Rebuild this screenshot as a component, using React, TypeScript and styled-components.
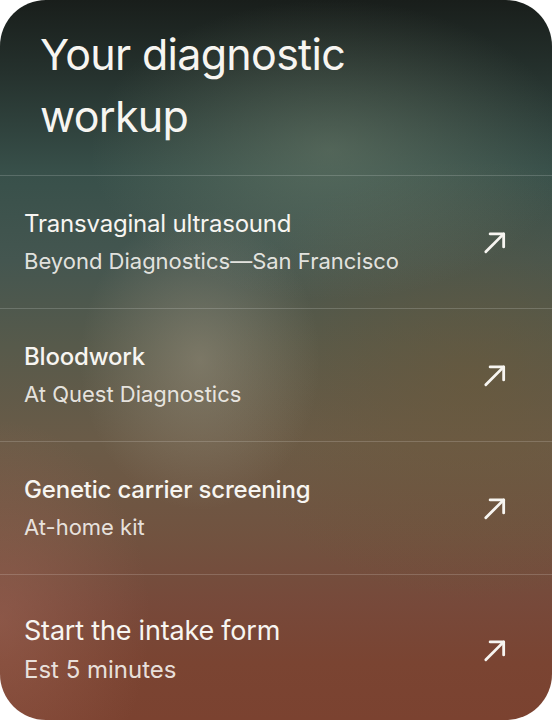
import styled, { createGlobalStyle } from 'styled-components'

const GlobalStyle = createGlobalStyle`
    html, body {
        margin: 0;
        padding: 0;
        background: #ffffff;
    }
    * {
        box-sizing: border-box;
    }
`

const items = [
    { title: 'Transvaginal ultrasound', sub: 'Beyond Diagnostics—San Francisco', strong: false },
    { title: 'Bloodwork', sub: 'At Quest Diagnostics', strong: true },
    { title: 'Genetic carrier screening', sub: 'At-home kit', strong: true },
    { title: 'Start the intake form', sub: 'Est 5 minutes', strong: false },
]

const Arrow = () => (
    <svg width="26" height="26" viewBox="0 0 24 24" fill="none" stroke="#f7f5f1" strokeWidth="2.6" strokeLinecap="round" strokeLinejoin="round">
        <path d="M3.5 21 L20 4.5" />
        <path d="M7.5 4.5 H20 V16.5" />
    </svg>
)

const App = () => {
    return (
        <>
            <GlobalStyle />
            <Card>
                <Header>
                    <Title>Your diagnostic workup</Title>
                </Header>
                {items.map((item, index) => {
                    const last = index === items.length - 1
                    return (
                        <Row key={index} $last={last}>
                            <TextBlock $last={last}>
                                <ItemTitle $strong={item.strong} $last={last}>{item.title}</ItemTitle>
                                <ItemSub $last={last}>{item.sub}</ItemSub>
                            </TextBlock>
                            <Arrow />
                        </Row>
                    )
                })}
            </Card>
        </>
    )
}

const Card = styled.div`
    width: 552px;
    height: 720px;
    border-radius: 46px;
    overflow: hidden;
    display: flex;
    flex-direction: column;
    font-family: Inter, 'Noto Sans', sans-serif;
    color: #f7f5f1;
    background:
        radial-gradient(ellipse 120px 150px at 200px 360px, rgba(165, 155, 135, 0.45), rgba(165, 155, 135, 0) 100%),
        radial-gradient(ellipse 240px 150px at 330px 150px, rgba(125, 140, 118, 0.42), rgba(125, 140, 118, 0) 100%),
        radial-gradient(ellipse 150px 200px at 0px 620px, rgba(170, 110, 95, 0.4), rgba(170, 110, 95, 0) 100%),
        radial-gradient(ellipse 260px 220px at 470px 380px, rgba(110, 88, 55, 0.5), rgba(110, 88, 55, 0) 100%),
        linear-gradient(180deg, #191e1b 0%, #25312d 10%, #38504a 24%, #445650 36%, #575a4b 48%, #6b5b47 62%, #715340 74%, #77493a 84%, #7a4432 92%, #7b4230 100%);
`

const Header = styled.div`
    height: 175px;
    padding: 23px 40px 0;
`

const Title = styled.h1`
    margin: 0;
    font-size: 43px;
    line-height: 62px;
    font-weight: 400;
    letter-spacing: -0.7px;
    max-width: 360px;
`

const Row = styled.div<{ $last: boolean }>`
    display: flex;
    align-items: center;
    justify-content: space-between;
    height: ${({ $last }) => ($last ? 'auto' : '133px')};
    flex: ${({ $last }) => ($last ? '1' : 'none')};
    padding: ${({ $last }) => ($last ? '4px 44px 0 24px' : '0 44px 0 24px')};
    border-top: 1.5px solid rgba(255, 255, 255, 0.17);
`

const TextBlock = styled.div<{ $last: boolean }>`
    display: flex;
    flex-direction: column;
    gap: ${({ $last }) => ($last ? '8px' : '6px')};
`

const ItemTitle = styled.div<{ $strong: boolean; $last: boolean }>`
    font-size: ${({ $last }) => ($last ? '27px' : '24px')};
    line-height: 32px;
    font-weight: ${({ $strong }) => ($strong ? 500 : 400)};
    letter-spacing: -0.2px;
`

const ItemSub = styled.div<{ $last: boolean }>`
    font-size: ${({ $last }) => ($last ? '24px' : '22px')};
    line-height: 30px;
    font-weight: 400;
    color: rgba(247, 245, 241, 0.9);
`

export default App
